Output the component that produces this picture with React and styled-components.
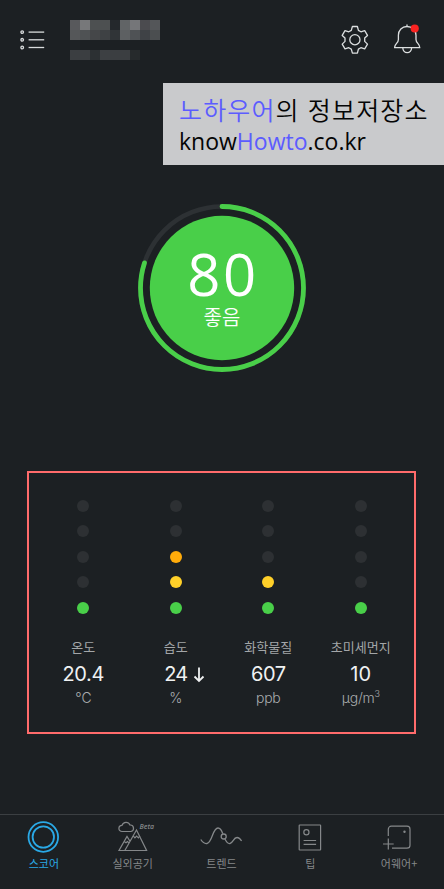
import React from 'react'
import styled, { createGlobalStyle } from 'styled-components'

const GlobalStyle = createGlobalStyle`
    * {
        box-sizing: border-box;
    }
    body {
        margin: 0;
        background: #1c2023;
        font-family: 'Noto Sans CJK KR', sans-serif;
    }
    svg {
        display: block;
    }
`

const Screen = styled.div`
    position: relative;
    width: 444px;
    height: 889px;
    display: flex;
    flex-direction: column;
    overflow: hidden;
    background: #1c2023;
`

const Header = styled.header`
    height: 80px;
    padding: 20px 22px 0 20px;
    display: flex;
    align-items: flex-start;
`

const MenuIcon = styled.svg`
    margin: 9px 25px 0 0;
`

const HiddenName = styled.div`
    width: 90px;
    display: grid;
    grid-template-columns: repeat(9, 10px);
    grid-auto-rows: 10px;
`

const Pixel = styled.span`
    background: ${({ tone }) => tone};
`

const Actions = styled.div`
    margin-left: auto;
    display: flex;
    gap: 25px;
`

const Banner = styled.div`
    position: absolute;
    top: 83px;
    right: 0;
    width: 281px;
    height: 82px;
    padding: 14px 0 0 16px;
    background: #c9cacc;
    color: #050505;
    white-space: nowrap;
    b {
        font-weight: inherit;
        color: #5c5cff;
    }
`

const BannerTitle = styled.div`
    font-family: 'Liberation Sans', 'Noto Sans CJK KR', sans-serif;
    font-size: 25px;
    line-height: 29px;
    font-weight: 350;
    letter-spacing: 1.15px;
`

const BannerUrl = styled.div`
    font-family: 'Open Sans', sans-serif;
    font-size: 23px;
    line-height: 31px;
    font-weight: 400;
    letter-spacing: 0;
`

const ScoreArea = styled.section`
    height: 391px;
    padding-top: 124px;
    display: flex;
    justify-content: center;
`

const ScoreRing = styled.div`
    width: 168px;
    height: 168px;
    display: grid;
    > * {
        grid-area: 1 / 1;
    }
`

const ScoreText = styled.div`
    display: flex;
    flex-direction: column;
    align-items: center;
    padding-top: 40px;
    color: #fff;
`

const ScoreValue = styled.div`
    font-family: 'Open Sans', sans-serif;
    font-size: 58px;
    line-height: 60px;
    font-weight: 400;
    letter-spacing: 2.5px;
    margin-right: -2px;
`

const ScoreLabel = styled.div`
    font-size: 20px;
    line-height: 26px;
    font-weight: 350;
`

const SensorPanel = styled.section`
    width: 389px;
    height: 263px;
    margin-left: 27px;
    padding: 27px 7px 0 8px;
    border: 2px solid #ff6b6b;
    display: grid;
    grid-template-columns: repeat(4, 1fr);
`

const Sensor = styled.div`
    display: flex;
    flex-direction: column;
    align-items: center;
    white-space: nowrap;
`

const Dots = styled.div`
    display: flex;
    flex-direction: column;
    gap: 13.4px;
    margin-bottom: 23px;
`

const Dot = styled.span`
    width: 12px;
    height: 12px;
    border-radius: 50%;
    background: ${({ color }) => color};
`

const SensorName = styled.div`
    font-size: 13px;
    line-height: 20px;
    color: #a3a6a8;
`

const SensorValue = styled.div`
    position: relative;
    margin-top: 4px;
    font-family: Inter, sans-serif;
    font-size: 20px;
    line-height: 26px;
    color: #eff1f2;
    letter-spacing: ${({ tracking }) => tracking || 0}px;
`

const Trend = styled.svg`
    position: absolute;
    left: 100%;
    top: 6px;
    margin-left: 6px;
`

const SensorUnit = styled.div`
    font-family: Inter, 'Noto Sans CJK KR', sans-serif;
    font-size: 14px;
    line-height: 22px;
    font-weight: 300;
    color: #a9acae;
    letter-spacing: -0.2px;
    sup {
        font-size: 9px;
        line-height: 0;
    }
`

const TabBar = styled.nav`
    height: 75px;
    margin-top: auto;
    border-top: 1px solid #3b3f42;
    display: grid;
    grid-template-columns: repeat(5, 1fr);
`

const Tab = styled.div`
    display: flex;
    flex-direction: column;
    align-items: center;
    padding-top: 5px;
    color: ${({ $active }) => ($active ? '#2aa9e6' : '#85888a')};
    svg {
        overflow: visible;
    }
`

const TabLabel = styled.div`
    font-size: 11px;
    line-height: 16px;
    margin-top: 1px;
    margin-left: -1px;
    white-space: nowrap;
`

const pixels = [
    '#58595c', '#77787a', '#4d5051', '#4d5051', '#24282c', '#616466', '#757679', '#4b4b4f', '#545659',
    '#555759', '#4f5254', '#454749', '#3e4144', '#303437', '#5d6062', '#4f5255', '#3f4246', '#4b4e50',
    '#1e2225', '#1c2023', '#1c2023', '#1c2023', '#1c2023', '#1c2023', '#1c2023', '#1c2023', '#1c2023',
    '#3b3e41', '#3b3e41', '#2c3033', '#3d4043', '#3b3e41', '#3b3e41', '#262a2c', '#1c2023', '#1c2023',
]

const OFF = '#2d3033'
const GREEN = '#49cf49'
const YELLOW = '#ffd029'
const ORANGE = '#ffab0a'

const sensors = [
    { name: '온도', value: '20.4', unit: '℃', dots: [OFF, OFF, OFF, OFF, GREEN], tracking: -0.4 },
    { name: '습도', value: '24', unit: '%', dots: [OFF, OFF, ORANGE, YELLOW, GREEN], falling: true, tracking: -0.8 },
    { name: '화학물질', value: '607', unit: 'ppb', dots: [OFF, OFF, OFF, YELLOW, GREEN], tracking: -0.4 },
    { name: '초미세먼지', value: '10', unit: <>μg/m<sup>3</sup></>, dots: [OFF, OFF, OFF, OFF, GREEN], tracking: 0 },
]

const TabIcon = ({ children }) => (
    <svg width='44' height='34' viewBox='0 0 44 34' fill='none' stroke='currentColor' strokeWidth='1.2'>
        {children}
    </svg>
)

const tabs = [
    {
        label: '스코어',
        icon: (
            <>
                <circle cx='21.3' cy='17' r='14.8' strokeWidth='1.8' />
                <circle cx='21.3' cy='17' r='10.7' strokeWidth='1.8' />
            </>
        ),
    },
    {
        label: '실외공기',
        icon: (
            <>
                <path d='M11 11.5a3.1 3.1 0 0 1 0-6.2a4.3 4.3 0 0 1 8-.3a3.3 3.3 0 0 1 1 6.5z' />
                <path d='M13.8 30.5L25.5 10L35.6 30.5H8L16 16.5L19 21.3' />
                <path d='M22.2 15.8l1.7 2l1.7-1.8l1.8 1.8l1.5-2M13.2 21.5l1.8 1.3l1.3-1.3l1.7 1.3' />
                <text x='28.5' y='9.3' fill='currentColor' stroke='none' fontSize='7' fontStyle='italic' fontFamily='Open Sans' fontWeight='600' textLength='14.5' lengthAdjust='spacingAndGlyphs'>Beta</text>
            </>
        ),
    },
    {
        label: '트렌드',
        icon: (
            <>
                <path d='M.8 19.5C2.8 22.5 4.8 24 7 23.5C12.5 22.2 12.5 8 18 8C20.4 8 21.7 10.5 22.8 13.7M24.9 19C26.4 22 28.2 23.8 30 23.5C33 23 33.5 17.5 37 17.5C39.5 17.5 40.4 19 41.6 21' strokeWidth='1.3' />
                <circle cx='23.7' cy='16.5' r='2.5' strokeWidth='1.3' />
            </>
        ),
    },
    {
        label: '팁',
        icon: (
            <>
                <rect x='10.2' y='5' width='21.4' height='25' rx='.5' />
                <circle cx='17.4' cy='12.3' r='2.6' />
                <path d='M14.6 20.5h12.5M14.6 24.4h12.5' />
            </>
        ),
    },
    {
        label: '어웨어+',
        icon: (
            <>
                <path d='M10.3 16V9.2a3 3 0 0 1 3-3H29a3 3 0 0 1 3 3v16a3 3 0 0 1-3 3H14M5 24h10.7M10.3 18.6v10.9' />
                <circle cx='26.5' cy='11.7' r='1.2' fill='currentColor' stroke='none' />
            </>
        ),
    },
]

const TopBar = () => (
    <Header>
        <MenuIcon width='25' height='22' viewBox='0 0 25 22' fill='none' stroke='#d9dcdd' strokeWidth='1.3'>
            {[3.1, 10.8, 18.5].map((y) => (
                <React.Fragment key={y}>
                    <circle cx='2.2' cy={y} r='1.3' />
                    <path d={`M8.6 ${y}h15.6`} />
                </React.Fragment>
            ))}
        </MenuIcon>
        <HiddenName>
            {pixels.map((tone, i) => <Pixel key={i} tone={tone} />)}
        </HiddenName>
        <Actions>
            <svg width='29' height='40' viewBox='0 0 29 40' fill='none' stroke='#dcdfe0' strokeWidth='1.3' strokeLinejoin='round'>
                <path d='M12.4 6.5h5l1 3.9l2.5 1.4l3.8-1.1l2.8 4.7l-2.8 2.6v3.4l2.8 2.7l-2.8 4.7l-3.8-1.1l-2.5 1.4l-1 4h-5l-1.1-4l-2.5-1.4L5 28.8l-2.8-4.7L5 21.4V18l-2.8-2.6L5 10.7l3.8 1.1l2.5-1.4z' />
                <circle cx='14.9' cy='19.7' r='5.1' />
            </svg>
            <svg width='28' height='40' viewBox='0 0 28 40' fill='none' stroke='#dcdfe0' strokeWidth='1.3' strokeLinejoin='round'>
                <path d='M13 4.5v2M13 6.5c-5 0-8.6 3.8-8.6 8.8v4.2c0 3.8-3.8 4-3.8 8.2h25.2c0-4.2-3.8-4.4-3.8-8.2v-4.2c0-5-4-8.8-9-8.8z' />
                <path d='M8.8 27.8a4.4 4.8 0 0 0 8.8 0' />
                <circle cx='20.7' cy='8.5' r='4.1' fill='#fa2321' stroke='none' />
            </svg>
        </Actions>
    </Header>
)

const Score = () => (
    <ScoreArea>
        <ScoreRing>
            <svg width='168' height='168' viewBox='0 0 168 168' fill='none'>
                <circle cx='84' cy='84' r='81.5' stroke='#2d3134' strokeWidth='4.6' />
                <circle
                    cx='84'
                    cy='84'
                    r='81.5'
                    stroke={GREEN}
                    strokeWidth='4.8'
                    strokeLinecap='round'
                    pathLength='100'
                    strokeDasharray='80 100'
                    transform='rotate(-90 84 84)'
                />
                <circle cx='84' cy='84' r='72.2' fill={GREEN} />
            </svg>
            <ScoreText>
                <ScoreValue>80</ScoreValue>
                <ScoreLabel>좋음</ScoreLabel>
            </ScoreText>
        </ScoreRing>
    </ScoreArea>
)

const App = () => {
    return (
        <>
            <GlobalStyle />
            <Screen>
                <TopBar />
                <Score />
                <SensorPanel>
                    {sensors.map(({ name, value, unit, dots, falling, tracking }) => (
                        <Sensor key={name}>
                            <Dots>
                                {dots.map((color, i) => <Dot key={i} color={color} />)}
                            </Dots>
                            <SensorName>{name}</SensorName>
                            <SensorValue tracking={tracking}>
                                {value}
                                {falling && (
                                    <Trend width='12' height='16' viewBox='0 0 12 16' fill='none' stroke='#eff1f2' strokeWidth='1.8'>
                                        <path d='M6 .5v13.5M1.5 9.5L6 14l4.5-4.5' />
                                    </Trend>
                                )}
                            </SensorValue>
                            <SensorUnit>{unit}</SensorUnit>
                        </Sensor>
                    ))}
                </SensorPanel>
                <TabBar>
                    {tabs.map(({ label, icon }, i) => (
                        <Tab key={label} $active={i === 0}>
                            <TabIcon>{icon}</TabIcon>
                            <TabLabel>{label}</TabLabel>
                        </Tab>
                    ))}
                </TabBar>
                <Banner>
                    <BannerTitle><b>노하우어</b>의 정보저장소</BannerTitle>
                    <BannerUrl>know<b>Howto</b>.co.kr</BannerUrl>
                </Banner>
            </Screen>
        </>
    )
}

export default App
